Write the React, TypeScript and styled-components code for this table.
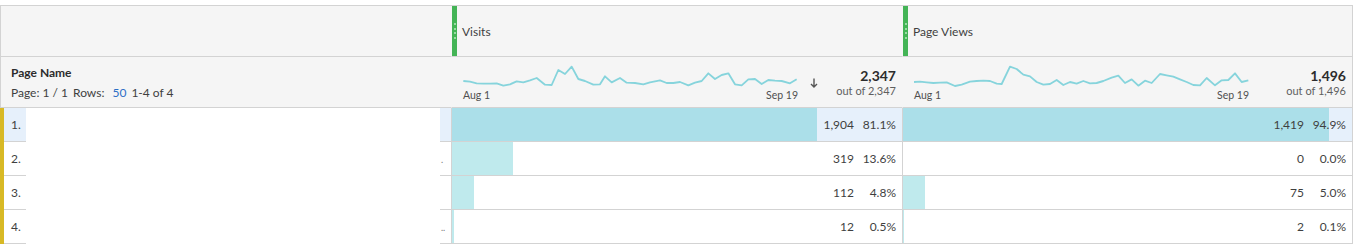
import React from "react";
import styled, { createGlobalStyle } from "styled-components";

const GlobalStyle = createGlobalStyle`
  html, body {
    margin: 0;
    padding: 0;
    background: #ffffff;
    font-family: Lato, "Liberation Sans", sans-serif;
    color: #3f3f3f;
  }
`;

const Page = styled.div`
  padding-top: 5px;
`;

const Table = styled.div`
  width: 1353px;
  box-sizing: border-box;
  border-top: 1px solid #d3d3d3;
  border-right: 1px solid #d3d3d3;
  display: grid;
  grid-template-columns: 451px 451px 1fr;
`;

const HeadCell = styled.div<{ $first?: boolean }>`
  height: 51px;
  box-sizing: border-box;
  background: #f5f5f5;
  border-bottom: 1px solid #d3d3d3;
  border-left: 1px solid ${(p) => (p.$first ? "#d3d3d3" : "#f5f5f5")};
  display: flex;
  align-items: center;
`;

const Grip = styled.div`
  width: 5px;
  align-self: stretch;
  background: #44b456;
  display: flex;
  flex-direction: column;
  align-items: center;
  justify-content: center;
  gap: 2.5px;
`;

const GripDot = styled.span`
  width: 2px;
  height: 2px;
  border-radius: 50%;
  background: #b8e6bf;
`;

const MetricTitle = styled.span`
  font-size: 12px;
  padding-left: 5px;
  color: #3f3f3f;
`;

const DimHead = styled(HeadCell)`
  flex-direction: column;
  align-items: flex-start;
  justify-content: center;
  padding-left: 10px;
  gap: 5px;
`;

const DimTitle = styled.div`
  font-size: 12px;
  font-weight: 700;
  color: #2c2c2c;
`;

const Pager = styled.div`
  font-size: 12px;
  color: #3f3f3f;
  display: flex;
  gap: 5px;
`;

const PagerLink = styled.span`
  color: #2d6fc6;
  margin-left: 3px;
`;

const SummaryCell = styled(HeadCell)`
  padding: 0 6px 0 11px;
`;

const Spark = styled.div`
  width: 335px;
  display: flex;
  flex-direction: column;
  padding-top: 1px;
`;

const SparkSvg = styled.svg`
  display: block;
  width: 335px;
  height: 24px;
`;

const SparkLabels = styled.div`
  display: flex;
  justify-content: space-between;
  font-size: 10.5px;
  line-height: 12px;
  color: #4f4f4f;
  margin-top: 1px;
`;

const Totals = styled.div`
  flex: 1;
  display: flex;
  align-items: center;
  justify-content: flex-end;
  gap: 18px;
`;

const TotalText = styled.div`
  text-align: right;
  display: flex;
  flex-direction: column;
  padding-top: 2px;
`;

const TotalValue = styled.span`
  font-size: 14px;
  line-height: 16px;
  font-weight: 700;
  color: #2c2c2c;
`;

const TotalOf = styled.span`
  font-size: 11px;
  line-height: 14px;
  color: #5f5f5f;
`;

const SortArrow = styled.svg`
  width: 8px;
  height: 10px;
  margin-top: 2px;
`;

const NameCell = styled.div`
  display: flex;
  height: 34px;
  border-left: 4px solid #d8b925;
`;

const IndexPart = styled.div<{ $selected?: boolean }>`
  width: 22px;
  box-sizing: border-box;
  border-bottom: 1px solid #d3d3d3;
  background: ${(p) => (p.$selected ? "#e6f0fb" : "#ffffff")};
  font-size: 12px;
  padding-left: 7px;
  display: flex;
  align-items: center;
`;

const Redacted = styled.div`
  flex: 1;
  background: #ffffff;
`;

const TailPart = styled(IndexPart)`
  width: 11px;
  padding-left: 1px;
  font-size: 9px;
  align-items: flex-end;
  padding-bottom: 10px;
  color: #777;
`;

const MetricCell = styled.div<{ $selected?: boolean }>`
  position: relative;
  height: 34px;
  box-sizing: border-box;
  border-left: 1px solid #d3d3d3;
  border-bottom: 1px solid #d3d3d3;
  background: ${(p) => (p.$selected ? "#e6f0fb" : "#ffffff")};
  display: flex;
  align-items: center;
  justify-content: flex-end;
  gap: 6px;
  padding-right: 6px;
  font-size: 12px;
  color: #3f3f3f;
`;

const Bar = styled.div<{ $selected?: boolean }>`
  position: absolute;
  left: 0;
  top: 0;
  bottom: 0;
  background: ${(p) => (p.$selected ? "#abdfe9" : "#bfeaed")};
`;

const Num = styled.span`
  position: relative;
`;

const Pct = styled.span`
  position: relative;
  min-width: 36px;
  text-align: right;
`;

const visitsPts = [
  [70, 243], [90, 245], [110, 250], [130, 251], [150, 251], [170, 250], [190, 257],
  [210, 253], [230, 244], [250, 247], [270, 241], [290, 234], [315, 254], [335, 255],
  [355, 210], [375, 222], [395, 200], [415, 237], [435, 243], [460, 254], [480, 253],
  [495, 229], [515, 247], [540, 234], [560, 248], [585, 249], [610, 253], [630, 247],
  [660, 241], [680, 249], [700, 249], [720, 246], [745, 256], [765, 248], [785, 243],
  [805, 220], [825, 237], [845, 225], [865, 220], [885, 253], [905, 256], [925, 238],
  [945, 237], [965, 252], [985, 240], [1005, 242], [1025, 243], [1050, 250], [1070, 238],
];

const viewsPts = [
  [42, 246], [60, 245], [80, 247], [100, 249], [120, 248], [140, 247], [165, 258],
  [185, 254], [210, 245], [230, 243], [250, 242], [270, 243], [290, 251], [305, 252],
  [330, 200], [350, 207], [370, 224], [390, 229], [410, 246], [430, 254], [450, 252],
  [470, 240], [490, 255], [510, 246], [530, 251], [550, 243], [570, 250], [590, 249],
  [610, 243], [635, 233], [655, 227], [675, 249], [695, 238], [715, 257], [735, 242],
  [755, 249], [780, 222], [800, 226], [820, 230], [840, 238], [860, 246], [880, 255],
  [900, 256], [920, 234], [945, 256], [965, 241], [985, 240], [1005, 220], [1025, 246],
  [1045, 241],
];

type Metric = {
  title: string;
  total: string;
  sorted?: boolean;
  pts: number[][];
  x0: number;
};

const metrics: Metric[] = [
  { title: "Visits", total: "2,347", sorted: true, pts: visitsPts, x0: 69 },
  { title: "Page Views", total: "1,496", pts: viewsPts, x0: 42 },
];

const rows = [
  { tail: "", cells: [["1,904", "81.1%", 81.1], ["1,419", "94.9%", 94.9]] },
  { tail: ".", cells: [["319", "13.6%", 13.6], ["0", "0.0%", 0]] },
  { tail: "", cells: [["112", "4.8%", 4.8], ["75", "5.0%", 5.0]] },
  { tail: "..", cells: [["12", "0.5%", 0.5], ["2", "0.1%", 0.1]] },
];

function Sparkline({ pts, x0 }: { pts: number[][]; x0: number }) {
  const d = pts.map(([x, y]) => `${x - x0},${y - 192}`).join(" ");
  return (
    <SparkSvg viewBox="0 0 1005 72" preserveAspectRatio="none">
      <polyline points={d} fill="none" stroke="#86d4dc" strokeWidth={5.5} strokeLinejoin="round" />
    </SparkSvg>
  );
}

export default function App() {
  return (
    <Page>
      <GlobalStyle />
      <Table>
        <HeadCell $first />
        {metrics.map((m) => (
          <HeadCell key={m.title}>
            <Grip>
              <GripDot />
              <GripDot />
              <GripDot />
              <GripDot />
            </Grip>
            <MetricTitle>{m.title}</MetricTitle>
          </HeadCell>
        ))}

        <DimHead $first>
          <DimTitle>Page Name</DimTitle>
          <Pager>
            <span>Page: 1 / 1</span>
            <span>Rows:</span>
            <PagerLink>50</PagerLink>
            <span>1-4 of 4</span>
          </Pager>
        </DimHead>
        {metrics.map((m) => (
          <SummaryCell key={m.title}>
            <Spark>
              <Sparkline pts={m.pts} x0={m.x0} />
              <SparkLabels>
                <span>Aug 1</span>
                <span>Sep 19</span>
              </SparkLabels>
            </Spark>
            <Totals>
              {m.sorted && (
                <SortArrow viewBox="0 0 8 10">
                  <path d="M4 0.5V9M1 6l3 3 3-3" fill="none" stroke="#555" strokeWidth={1.4} />
                </SortArrow>
              )}
              <TotalText>
                <TotalValue>{m.total}</TotalValue>
                <TotalOf>out of {m.total}</TotalOf>
              </TotalText>
            </Totals>
          </SummaryCell>
        ))}

        {rows.map((r, i) => {
          const sel = i === 0;
          return (
            <React.Fragment key={i}>
              <NameCell>
                <IndexPart $selected={sel}>{i + 1}.</IndexPart>
                <Redacted />
                <TailPart $selected={sel}>{r.tail}</TailPart>
              </NameCell>
              {r.cells.map(([n, p, w], j) => (
                <MetricCell key={j} $selected={sel}>
                  <Bar $selected={sel} style={{ width: `${w}%` }} />
                  <Num>{n}</Num>
                  <Pct>{p}</Pct>
                </MetricCell>
              ))}
            </React.Fragment>
          );
        })}
      </Table>
    </Page>
  );
}
